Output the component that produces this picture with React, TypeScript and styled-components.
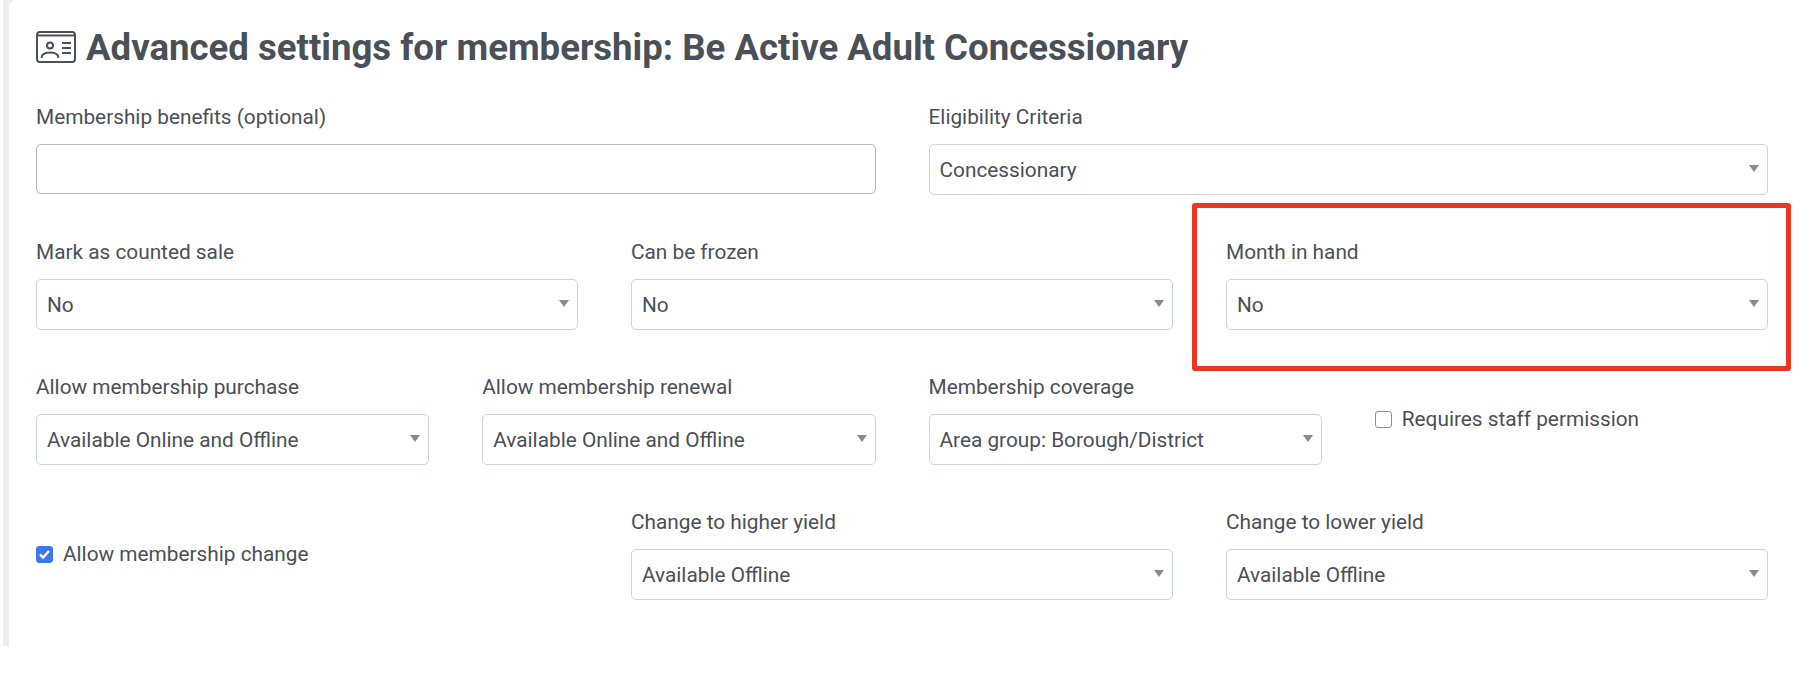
import React from 'react'
import styled, { createGlobalStyle } from 'styled-components'

const GlobalStyle = createGlobalStyle`
  html, body {
    margin: 0;
    background: #fff;
    font-family: Roboto, "Liberation Sans", sans-serif;
  }
`
const Shell = styled.div`
  margin-left: 3px;
  height: 646px;
  background-color: #efefef;
`
const Panel = styled.div`
  box-sizing: border-box;
  margin-left: 6px;
  height: 100%;
  padding: 24px 42px 0 27px;
  background-color: #fff;
  border-top-left-radius: 6px;
`
const Heading = styled.h2`
  display: flex;
  align-items: center;
  gap: 10px;
  margin: 0 0 35px;
  height: 46px;
  font-size: 36.6px;
  font-weight: 700;
  color: #495057;
  white-space: nowrap;
`
const Row = styled.div<{ $cols: number }>`
  display: grid;
  grid-template-columns: repeat(${({ $cols }) => $cols}, 1fr);
  column-gap: 53px;
  margin-bottom: 45px;
`
const Field = styled.div`
  position: relative;
`
const Label = styled.label`
  display: block;
  height: 24px;
  margin-bottom: 15px;
  font-size: 20.8px;
  line-height: 24px;
  color: #495057;
`
const TextInput = styled.input`
  display: block;
  box-sizing: border-box;
  width: 100%;
  height: 50px;
  border: 1.5px solid #b4b6b8;
  border-radius: 5px;
  background: #fff;
`
const SelectBox = styled.div`
  display: flex;
  align-items: center;
  justify-content: space-between;
  box-sizing: border-box;
  height: 51px;
  padding: 1px 8px 0 10px;
  border: 1.5px solid #ced4da;
  border-radius: 5px;
  background: #fff;
  font-size: 20.8px;
  color: #495057;
`
const Caret = styled.span`
  width: 0;
  height: 0;
  margin-bottom: 4px;
  border-left: 5px solid transparent;
  border-right: 5px solid transparent;
  border-top: 7px solid #8a8a8a;
`
const CheckLine = styled.div`
  display: flex;
  align-items: center;
  gap: 10px;
  align-self: start;
  margin-top: 32px;
  font-size: 20.8px;
  line-height: 24px;
  color: #495057;
`
const Box = styled.span<{ $checked?: boolean }>`
  display: flex;
  align-items: center;
  justify-content: center;
  box-sizing: border-box;
  width: 17px;
  height: 17px;
  border-radius: 3px;
  border: 1px solid ${({ $checked }) => ($checked ? '#3b78f0' : '#8f8f8f')};
  background: ${({ $checked }) => ($checked ? '#3b78f0' : '#fff')};
`
const Highlight = styled.div`
  position: absolute;
  top: -37px;
  left: -34px;
  right: -23px;
  bottom: -41px;
  border: 5.5px solid #ee3524;
  border-radius: 3px;
  pointer-events: none;
`

function MemberCardIcon() {
  return (
    <svg width="40" height="32" viewBox="0 0 40 32" fill="none" stroke="#495057" strokeWidth="2">
      <rect x="1" y="1" width="38" height="30" rx="3" />
      <path d="M1 4.500h38" />
      <circle cx="14" cy="14.500" r="3" />
      <path d="M5.500 27c0-3.500 3.500-5.500 8.500-5.500s8.500 2 8.500 5.500" />
      <path d="M26 12h9M26 17h9M26 22h9" />
    </svg>
  )
}

function SelectField({ label, value, children }: { label: string; value: string; children?: React.ReactNode }) {
  return (
    <Field>
      <Label>{label}</Label>
      <SelectBox>
        {value}
        <Caret />
      </SelectBox>
      {children}
    </Field>
  )
}

export default function App() {
  return (
    <>
      <GlobalStyle />
      <Shell>
        <Panel>
          <Heading>
            <MemberCardIcon />
            Advanced settings for membership: Be Active Adult Concessionary
          </Heading>
          <Row $cols={2}>
            <Field>
              <Label>Membership benefits (optional)</Label>
              <TextInput />
            </Field>
            <SelectField label="Eligibility Criteria" value="Concessionary" />
          </Row>
          <Row $cols={3}>
            <SelectField label="Mark as counted sale" value="No" />
            <SelectField label="Can be frozen" value="No" />
            <SelectField label="Month in hand" value="No">
              <Highlight />
            </SelectField>
          </Row>
          <Row $cols={4}>
            <SelectField label="Allow membership purchase" value="Available Online and Offline" />
            <SelectField label="Allow membership renewal" value="Available Online and Offline" />
            <SelectField label="Membership coverage" value="Area group: Borough/District" />
            <CheckLine>
              <Box />
              Requires staff permission
            </CheckLine>
          </Row>
          <Row $cols={3}>
            <CheckLine>
              <Box $checked>
                <svg width="13" height="13" viewBox="0 0 13 13" fill="none" stroke="#fff" strokeWidth="2.400">
                  <path d="M2 6.500l3 3 6-6.500" />
                </svg>
              </Box>
              Allow membership change
            </CheckLine>
            <SelectField label="Change to higher yield" value="Available Offline" />
            <SelectField label="Change to lower yield" value="Available Offline" />
          </Row>
        </Panel>
      </Shell>
    </>
  )
}
